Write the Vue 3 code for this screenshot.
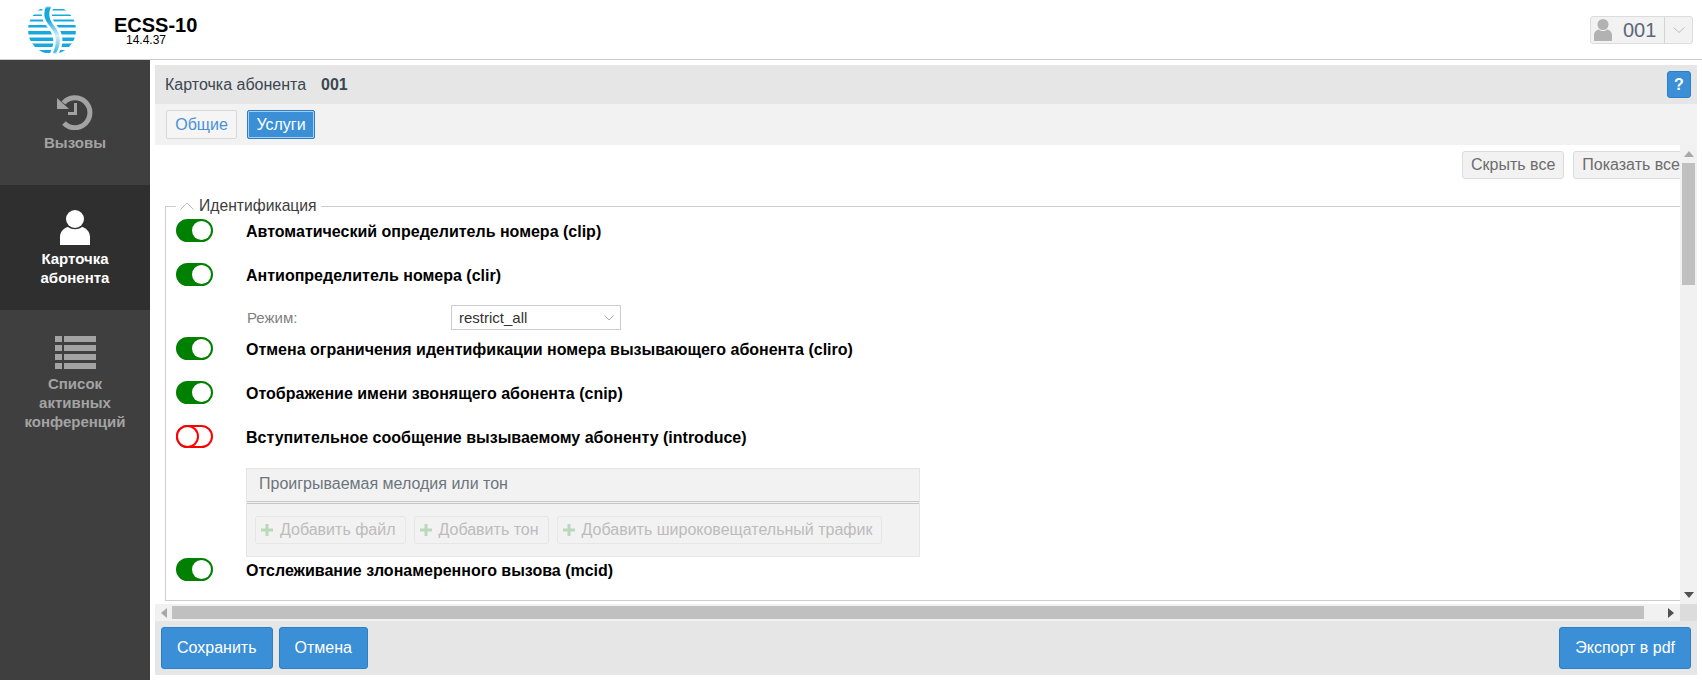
<script setup>
const rowsA = [
  { label: 'Автоматический определитель номера (clip)', on: true },
  { label: 'Антиопределитель номера (clir)', on: true }
]
const rowsB = [
  { label: 'Отмена ограничения идентификации номера вызывающего абонента (cliro)', on: true },
  { label: 'Отображение имени звонящего абонента (cnip)', on: true },
  { label: 'Вступительное сообщение вызываемому абоненту (introduce)', on: false }
]
const addButtons = ['Добавить файл', 'Добавить тон', 'Добавить широковещательный трафик']
</script>

<template>
  <div class="app">
    <header class="top">
      <svg class="logo" viewBox="0 0 48 48" width="48" height="48">
        <defs>
          <clipPath id="disc"><circle cx="24" cy="24" r="24" /></clipPath>
          <linearGradient id="ess" x1="0" y1="0" x2="0" y2="1">
            <stop offset="0" stop-color="#18a8e0" />
            <stop offset="0.3" stop-color="#18a8e0" />
            <stop offset="0.62" stop-color="#d8f0fa" />
            <stop offset="1" stop-color="#2fb0e4" />
          </linearGradient>
        </defs>
        <g clip-path="url(#disc)">
          <rect x="0" y="3" width="48" height="1.5" fill="#18a8e0" />
          <rect x="0" y="8.5" width="48" height="1.5" fill="#18a8e0" />
          <rect x="0" y="13.5" width="48" height="2" fill="#18a8e0" />
          <rect x="0" y="19" width="48" height="2.5" fill="#18a8e0" />
          <rect x="0" y="25" width="48" height="3.5" fill="#18a8e0" />
          <rect x="0" y="31.5" width="48" height="3.5" fill="#18a8e0" />
          <rect x="0" y="37.5" width="48" height="3.5" fill="#18a8e0" />
          <rect x="0" y="44" width="48" height="3" fill="#18a8e0" />
          <path d="M17 0 C13 8 15 14 20 20 C27 28 29 36 23 48 L29 48 C36 36 33 26 27 19 C23 14 20 8 25 0 Z" fill="url(#ess)" stroke="#fff" stroke-width="2.5" />
        </g>
      </svg>
      <div class="brand">
        <div class="brand-name">ECSS-10</div>
        <div class="brand-ver">14.4.37</div>
      </div>
      <div class="user-btn">
        <div class="user-main">
          <svg viewBox="0 0 18 22" width="18" height="22">
            <circle cx="9" cy="5.5" r="5.5" fill="#b2b2b2" />
            <path d="M0 22 V16 C0 12 4 10.5 5 10.5 C7 12.5 11 12.5 13 10.5 C14 10.5 18 12 18 16 V22 Z" fill="#b2b2b2" />
          </svg>
          <span>001</span>
        </div>
        <div class="user-caret">
          <svg viewBox="0 0 12 7" width="12" height="7"><path d="M0.5 0.5 L6 5.5 L11.5 0.5" fill="none" stroke="#bdbdbd" /></svg>
        </div>
      </div>
    </header>

    <div class="body">
      <nav class="side">
        <div class="nav-item">
          <svg class="nav-ico" viewBox="0 0 36 36" width="36" height="36">
            <path d="M6.5 9 A15 15 0 1 1 7 29" fill="none" stroke="#a3a3a3" stroke-width="5" />
            <path d="M0 4 L0 15 L12 15 Z" fill="#a3a3a3" />
            <path d="M18.5 9 V19.5 H11" fill="none" stroke="#a3a3a3" stroke-width="3" />
          </svg>
          <div class="nav-label">Вызовы</div>
        </div>
        <div class="nav-item active">
          <svg class="nav-ico" viewBox="0 0 30 36" width="30" height="36">
            <circle cx="15" cy="9" r="9" fill="#fff" />
            <path d="M0 35 V27 C0 21 5 17.5 8 17 C12 20 18 20 22 17 C25 17.5 30 21 30 27 V35 Z" fill="#fff" />
          </svg>
          <div class="nav-label">Карточка<br />абонента</div>
        </div>
        <div class="nav-item">
          <svg class="nav-ico" viewBox="0 0 41 33" width="41" height="33">
            <g fill="#a3a3a3">
              <rect x="0" y="0" width="7" height="6" /><rect x="9" y="0" width="32" height="6" />
              <rect x="0" y="9" width="7" height="6" /><rect x="9" y="9" width="32" height="6" />
              <rect x="0" y="18" width="7" height="6" /><rect x="9" y="18" width="32" height="6" />
              <rect x="0" y="27" width="7" height="6" /><rect x="9" y="27" width="32" height="6" />
            </g>
          </svg>
          <div class="nav-label">Список<br />активных<br />конференций</div>
        </div>
      </nav>

      <main class="main">
        <div class="title-bar">
          <span class="title-text">Карточка абонента</span>
          <b class="title-num">001</b>
          <button class="help">?</button>
        </div>
        <div class="tabs">
          <button class="tab">Общие</button>
          <button class="tab on">Услуги</button>
        </div>
        <div class="scroll-wrap">
          <div class="scroll-row">
            <div class="viewport">
              <div class="canvas">
                <div class="tools">
                  <button class="tool">Скрыть все</button>
                  <button class="tool">Показать все</button>
                </div>
                <fieldset class="group">
                  <legend class="legend">
                    <svg viewBox="0 0 14 8" width="14" height="8"><path d="M0.5 7.5 L7 1 L13.5 7.5" fill="none" stroke="#bdbdbd" /></svg>
                    <span>Идентификация</span>
                  </legend>
                  <div v-for="r in rowsA" :key="r.label" class="row">
                    <span class="toggle" :class="{ off: !r.on }"><i></i></span>
                    <span class="row-label">{{ r.label }}</span>
                  </div>
                  <div class="mode">
                    <span class="mode-label">Режим:</span>
                    <div class="select">
                      <span>restrict_all</span>
                      <svg viewBox="0 0 10 6" width="10" height="6"><path d="M0.5 0.5 L5 5 L9.5 0.5" fill="none" stroke="#aaa" /></svg>
                    </div>
                  </div>
                  <div v-for="r in rowsB" :key="r.label" class="row">
                    <span class="toggle" :class="{ off: !r.on }"><i></i></span>
                    <span class="row-label">{{ r.label }}</span>
                  </div>
                  <div class="panel">
                    <div class="panel-head">Проигрываемая мелодия или тон</div>
                    <div class="panel-body">
                      <button v-for="b in addButtons" :key="b" class="add">
                        <svg viewBox="0 0 12 12" width="12" height="12"><path d="M4.5 0 H7.5 V4.5 H12 V7.5 H7.5 V12 H4.5 V7.5 H0 V4.5 H4.5 Z" fill="#b9d8b9" /></svg>
                        <span>{{ b }}</span>
                      </button>
                    </div>
                  </div>
                  <div class="row last">
                    <span class="toggle"><i></i></span>
                    <span class="row-label">Отслеживание злонамеренного вызова (mcid)</span>
                  </div>
                </fieldset>
              </div>
            </div>
            <div class="vbar">
              <svg viewBox="0 0 10 6" width="10" height="6"><path d="M0 6 L5 0 L10 6 Z" fill="#a8a8a8" /></svg>
              <div class="vtrack"><div class="vthumb"></div></div>
              <svg viewBox="0 0 10 6" width="10" height="6"><path d="M0 0 L5 6 L10 0 Z" fill="#505050" /></svg>
            </div>
          </div>
          <div class="hrow">
            <div class="hbar">
              <svg viewBox="0 0 6 10" width="6" height="10"><path d="M6 0 L0 5 L6 10 Z" fill="#a8a8a8" /></svg>
              <div class="htrack"><div class="hthumb"></div></div>
              <svg viewBox="0 0 6 10" width="6" height="10"><path d="M0 0 L6 5 L0 10 Z" fill="#505050" /></svg>
            </div>
            <div class="corner"></div>
          </div>
        </div>
        <div class="footer">
          <button class="action">Сохранить</button>
          <button class="action">Отмена</button>
          <button class="action export">Экспорт в pdf</button>
        </div>
      </main>
    </div>
  </div>
</template>

<style>
html, body { margin: 0; background: #fff; }
</style>

<style scoped>
* { box-sizing: border-box; }
.app {
  width: 1702px; height: 680px; overflow: hidden; display: flex; flex-direction: column;
  font-family: "Liberation Sans", Arial, sans-serif; background: #fff;
}
button { font-family: inherit; cursor: default; }

.top {
  height: 60px; flex: none; display: flex; align-items: flex-start; border-bottom: 1px solid #ccc;
  padding: 6px 9px 0 28px;
}
.logo { flex: none; }
.brand { margin-left: 38px; margin-top: 9px; width: 100px; }
.brand-name { font-size: 20px; line-height: 20px; font-weight: 700; color: #000; }
.brand-ver { font-size: 12px; line-height: 12px; color: #000; margin-left: 12px; margin-top: -1px; }
.user-btn {
  margin-left: auto; margin-top: 10px; width: 103px; height: 28px; display: flex;
  background: #f2f2f2; border: 1px solid #dcdcdc; border-radius: 3px;
}
.user-main {
  flex: 1; display: flex; align-items: center; padding-left: 3px; gap: 11px;
  border-right: 1px solid #d4d4d4; font-size: 20px; color: #5a6878;
}
.user-caret { width: 27px; display: flex; align-items: center; justify-content: center; }

.body { flex: 1; display: flex; min-height: 0; }
.side { width: 150px; flex: none; background: #3f3f3f; }
.nav-item {
  height: 125px; display: flex; flex-direction: column; align-items: center; padding-top: 35px;
  color: #a3a3a3; font-size: 15px; font-weight: 700; text-align: center; line-height: 19px;
}
.nav-item:nth-child(2) { padding-top: 25px; }
.nav-item:nth-child(3) { padding-top: 26px; }
.nav-item.active { background: #2f2f2f; color: #fff; }
.nav-ico { flex: none; display: block; }
.nav-label { margin-top: 3px; }
.nav-item:nth-child(3) .nav-label { margin-top: 5px; }
.nav-item:first-child .nav-ico { margin-top: -1px; }

.main { flex: 1; min-width: 0; margin: 5px; display: flex; flex-direction: column; }
.title-bar {
  height: 39px; flex: none; background: #e6e6e6; display: flex; align-items: center;
  padding: 0 6px 0 10px; font-size: 16px; color: #3c4650;
}
.title-text { width: 156px; white-space: nowrap; }
.title-num { font-weight: 700; }
.help {
  margin-left: auto; width: 24px; height: 27px; padding: 0; background: #3a8fd6; border: 1px solid #2a7fc8;
  border-radius: 3px; color: #fff; font-size: 16px; font-weight: 700;
}
.tabs {
  height: 41px; flex: none; background: #f2f2f2; display: flex; gap: 10px; padding: 6px 0 0 11px;
  align-items: flex-start;
}
.tab {
  height: 29px; width: 71px; padding: 0; background: #f5f5f5; border: 1px solid #d8d8d8; border-radius: 2px;
  color: #4a90d9; font-size: 16px;
}
.tab.on {
  width: 68px; background: #3a8fd6; border-color: #2a7fc8; color: #fff;
  box-shadow: inset 0 0 0 1px #a9cfee;
}

.scroll-wrap { flex: 1; min-height: 0; display: flex; flex-direction: column; }
.scroll-row { flex: 1; min-height: 0; display: flex; }
.viewport { flex: 1; min-width: 0; overflow: hidden; background: #fff; }
.canvas { width: 1544px; padding: 6px 10px 0; }
.tools { display: flex; justify-content: flex-end; gap: 9px; }
.tool {
  height: 28px; padding: 0 8px; background: #f2f2f2; border: 1px solid #dcdcdc; border-radius: 3px;
  color: #6c6c6c; font-size: 16px; white-space: nowrap;
}
.group {
  margin: 18px 0 0; padding: 4px 0 0 10px; height: 404px; min-width: 0;
  border: 1px solid #ccc; border-right: 0;
}
.legend {
  padding: 0 4px; display: flex; align-items: center; gap: 5px;
  font-size: 15.7px; line-height: 18px; color: #3c3c3c;
}
.row { display: flex; align-items: center; height: 23px; margin-bottom: 21px; }
.row.last { margin-bottom: 0; }
.toggle {
  flex: none; width: 37px; height: 23px; border-radius: 12px; background: #008000; border: 2px solid #008000;
  position: relative; display: block;
}
.toggle i {
  position: absolute; top: 0; right: 0; width: 19px; height: 19px; border-radius: 50%; background: #fff; display: block;
}
.toggle.off { background: #fff; border-color: #f00; }
.toggle.off i { left: -2px; top: -2px; right: auto; width: 23px; height: 23px; border: 2px solid #f00; }
.row-label { margin-left: 33px; padding-top: 2px; font-size: 16px; font-weight: 700; color: #000; white-space: nowrap; }
.mode {
  display: flex; align-items: center; height: 25px; margin: -2px 0 7px 70px; padding-left: 1px;
  font-size: 15px; color: #808080;
}
.mode-label { width: 204px; }
.select {
  width: 170px; height: 25px; background: #fff; border: 1px solid #ccc; display: flex; align-items: center;
  justify-content: space-between; padding: 0 6px 0 7px; color: #333; font-size: 15px;
}
.panel {
  width: 674px; height: 89px; margin: -1px 0 1px 70px; background: #f2f2f2; border: 1px solid #e6e6e6;
}
.panel-head {
  height: 35px; line-height: 30px; padding-left: 12px; font-size: 16px; color: #6c757d;
  border-bottom: 3px double #c6c6c6;
}
.panel-body { display: flex; gap: 8px; padding: 12px 0 0 8px; }
.add {
  height: 28px; padding: 0 9px 0 5px; display: flex; align-items: center; gap: 7px; background: #f2f2f2;
  border: 1px solid #e6e6e6; border-radius: 3px; color: #bcbcbc; font-size: 16px; white-space: nowrap;
}
.vbar {
  width: 17px; flex: none; background: #f1f1f1; display: flex; flex-direction: column; align-items: center;
  padding: 6px 0; gap: 6px;
}
.vtrack { flex: 1; width: 100%; padding: 0 2px; }
.vthumb { height: 122px; background: #c0c0c0; }
.hrow { height: 17px; flex: none; display: flex; }
.hbar {
  flex: 1; min-width: 0; background: #f1f1f1; display: flex; align-items: center; padding: 0 6px;
  gap: 5px;
}
.htrack { flex: 1; height: 13px; padding: 0 19px 0 0; }
.hthumb { height: 100%; background: #c0c0c0; }
.corner { width: 17px; background: #dcdcdc; }
.footer {
  height: 54px; flex: none; background: #e6e6e6; display: flex; align-items: flex-start; gap: 6px;
  padding: 6px 6px 0 6px;
}
.action {
  height: 42px; padding: 0 15px; background: #3a8fd6; border: 1px solid #2a7fc8; border-radius: 3px;
  color: #fff; font-size: 16px;
}
.export { margin-left: auto; }
</style>
